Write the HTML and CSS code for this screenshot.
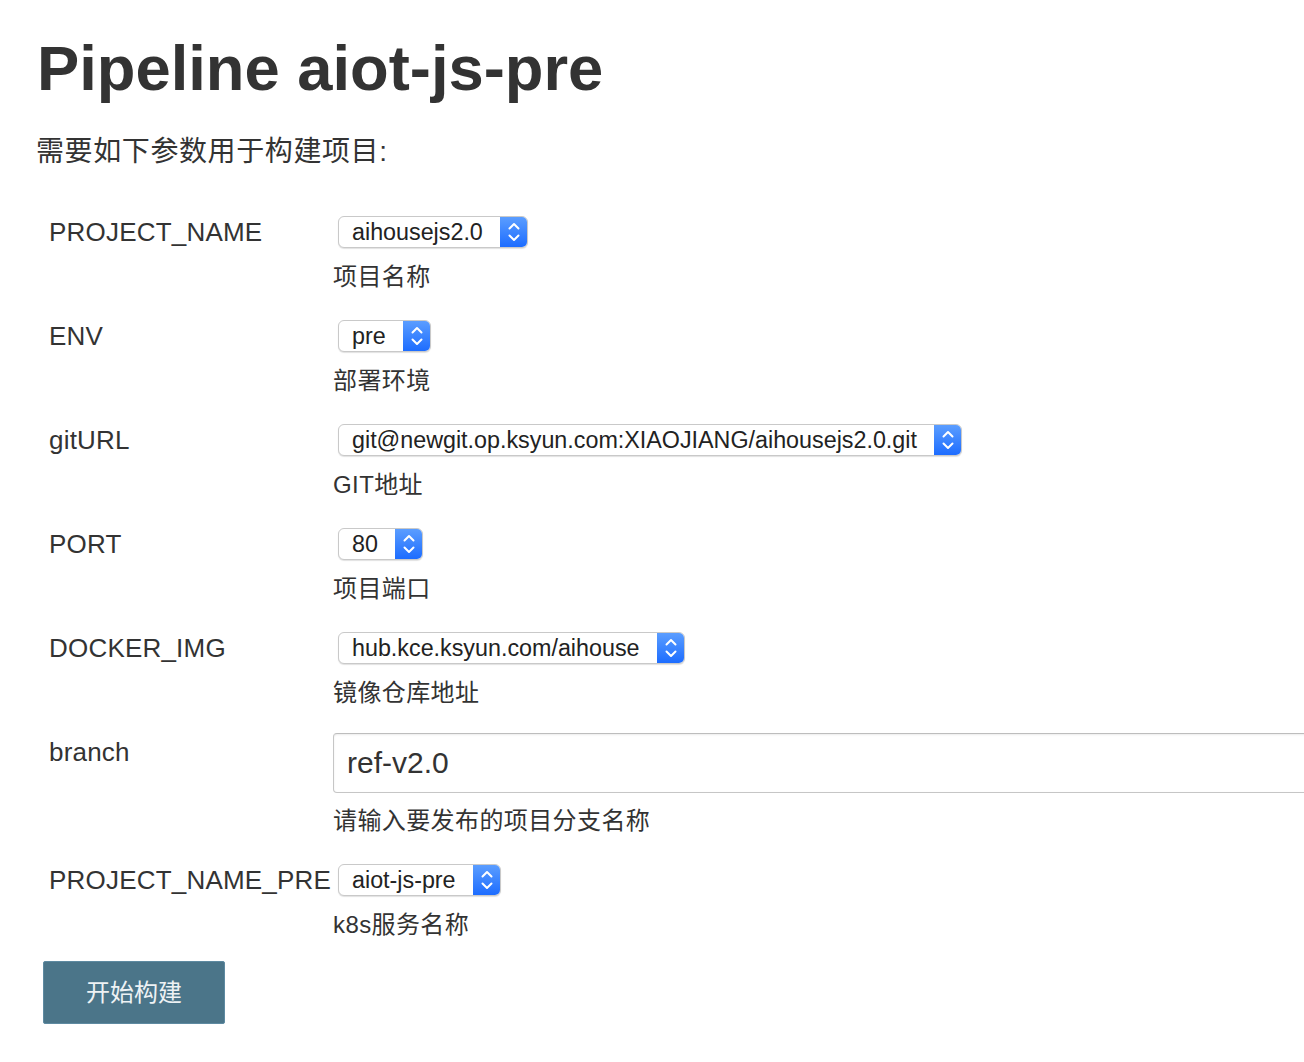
FILE: index.html
```html
<!DOCTYPE html>
<html lang="zh-CN">
<head>
<meta charset="utf-8">
<title>Pipeline aiot-js-pre</title>
<link rel="stylesheet" href="styles.css">
</head>
<body>
<main class="page">
  <h1 class="title">Pipeline aiot-js-pre</h1>
  <p class="intro">需要如下参数用于构建项目:</p>
  <form class="params">
    <div class="param">
      <div class="param-name">PROJECT_NAME</div>
      <div class="param-value">
        <div class="select"><span class="select-text">aihousejs2.0</span><span class="select-arrow"><svg width="28" height="32" viewBox="0 0 28 32"><path d="M9.5 12.5 L14 8 L18.5 12.5 M9.5 19.5 L14 24 L18.5 19.5" stroke="#fff" stroke-width="2" fill="none" stroke-linecap="round" stroke-linejoin="round"/></svg></span></div>
        <div class="param-desc">项目名称</div>
      </div>
    </div>
    <div class="param">
      <div class="param-name">ENV</div>
      <div class="param-value">
        <div class="select"><span class="select-text">pre</span><span class="select-arrow"><svg width="28" height="32" viewBox="0 0 28 32"><path d="M9.5 12.5 L14 8 L18.5 12.5 M9.5 19.5 L14 24 L18.5 19.5" stroke="#fff" stroke-width="2" fill="none" stroke-linecap="round" stroke-linejoin="round"/></svg></span></div>
        <div class="param-desc">部署环境</div>
      </div>
    </div>
    <div class="param">
      <div class="param-name">gitURL</div>
      <div class="param-value">
        <div class="select"><span class="select-text">git@newgit.op.ksyun.com:XIAOJIANG/aihousejs2.0.git</span><span class="select-arrow"><svg width="28" height="32" viewBox="0 0 28 32"><path d="M9.5 12.5 L14 8 L18.5 12.5 M9.5 19.5 L14 24 L18.5 19.5" stroke="#fff" stroke-width="2" fill="none" stroke-linecap="round" stroke-linejoin="round"/></svg></span></div>
        <div class="param-desc">GIT地址</div>
      </div>
    </div>
    <div class="param">
      <div class="param-name">PORT</div>
      <div class="param-value">
        <div class="select"><span class="select-text">80</span><span class="select-arrow"><svg width="28" height="32" viewBox="0 0 28 32"><path d="M9.5 12.5 L14 8 L18.5 12.5 M9.5 19.5 L14 24 L18.5 19.5" stroke="#fff" stroke-width="2" fill="none" stroke-linecap="round" stroke-linejoin="round"/></svg></span></div>
        <div class="param-desc">项目端口</div>
      </div>
    </div>
    <div class="param">
      <div class="param-name">DOCKER_IMG</div>
      <div class="param-value">
        <div class="select"><span class="select-text">hub.kce.ksyun.com/aihouse</span><span class="select-arrow"><svg width="28" height="32" viewBox="0 0 28 32"><path d="M9.5 12.5 L14 8 L18.5 12.5 M9.5 19.5 L14 24 L18.5 19.5" stroke="#fff" stroke-width="2" fill="none" stroke-linecap="round" stroke-linejoin="round"/></svg></span></div>
        <div class="param-desc">镜像仓库地址</div>
      </div>
    </div>
    <div class="param">
      <div class="param-name">branch</div>
      <div class="param-value">
        <input class="text-input" type="text" value="ref-v2.0">
        <div class="param-desc param-desc-input">请输入要发布的项目分支名称</div>
      </div>
    </div>
    <div class="param">
      <div class="param-name">PROJECT_NAME_PRE</div>
      <div class="param-value">
        <div class="select"><span class="select-text">aiot-js-pre</span><span class="select-arrow"><svg width="28" height="32" viewBox="0 0 28 32"><path d="M9.5 12.5 L14 8 L18.5 12.5 M9.5 19.5 L14 24 L18.5 19.5" stroke="#fff" stroke-width="2" fill="none" stroke-linecap="round" stroke-linejoin="round"/></svg></span></div>
        <div class="param-desc">k8s服务名称</div>
      </div>
    </div>
    <button class="build-btn" type="button">开始构建</button>
  </form>
</main>
</body>
</html>
```

FILE: styles.css
```css
html, body {
  margin: 0;
  padding: 0;
  overflow: hidden;
  background: #fff;
}

body {
  font-family: "Liberation Sans", "Noto Sans CJK SC", sans-serif;
  color: #333;
}

.page {
  padding-left: 35px;
}

.title {
  margin: 28px 0 0;
  padding-left: 2px;
  font-size: 63.3px;
  line-height: 80px;
  font-weight: bold;
  color: #333;
}

.intro {
  margin: 24px 0 0;
  padding-left: 1px;
  font-size: 28px;
  line-height: 40px;
  letter-spacing: 0.6px;
}

.params {
  margin-top: 44px;
  display: flex;
  flex-direction: column;
  align-items: flex-start;
}

.param {
  display: grid;
  grid-template-columns: 298px auto;
  margin-bottom: 28px;
}

.param-name {
  padding-left: 14px;
  font-size: 26px;
  line-height: 32px;
  letter-spacing: 0.2px;
  white-space: nowrap;
}

.param-value {
  display: flex;
  flex-direction: column;
  align-items: flex-start;
}

.select {
  margin-left: 5px;
  height: 32px;
  box-sizing: border-box;
  display: inline-flex;
  align-items: stretch;
  background: #fff;
  border: 1px solid #c9c9c9;
  border-radius: 6px;
  box-shadow: 0 1px 1px rgba(0, 0, 0, 0.12);
  overflow: hidden;
}

.select-text {
  padding: 0 17px 0 13px;
  font-size: 23.3px;
  line-height: 30px;
  color: #222;
  white-space: nowrap;
}

.select-arrow {
  width: 28px;
  margin: -1px -1px -1px 0;
  background: linear-gradient(#5d9fff, #1b6bff);
  display: flex;
}

.select-arrow svg {
  display: block;
}

.param-desc {
  margin-top: 14px;
  font-size: 24px;
  line-height: 30px;
  letter-spacing: 0.4px;
  white-space: nowrap;
}

.text-input {
  margin: -3px 0 0;
  width: 1000px;
  height: 60px;
  box-sizing: border-box;
  padding: 0 13px;
  border: 1px solid #c6c6c6;
  border-top-color: #bdbdbd;
  border-radius: 4px;
  box-shadow: inset 0 1px 2px rgba(0, 0, 0, 0.08);
  font-family: "Liberation Sans", "Noto Sans CJK SC", sans-serif;
  font-size: 30px;
  color: #333;
  background: #fff;
  outline: none;
}

.param-desc-input {
  margin-top: 13px;
}

.build-btn {
  margin: -7px 0 0 8px;
  width: 182px;
  height: 63px;
  background: #4b7589;
  border: 1px solid #5e8aa1;
  border-radius: 2px;
  color: #eef2f4;
  font-family: "Liberation Sans", "Noto Sans CJK SC", sans-serif;
  font-size: 24px;
  padding: 0 0 5px;
  cursor: pointer;
}
```
